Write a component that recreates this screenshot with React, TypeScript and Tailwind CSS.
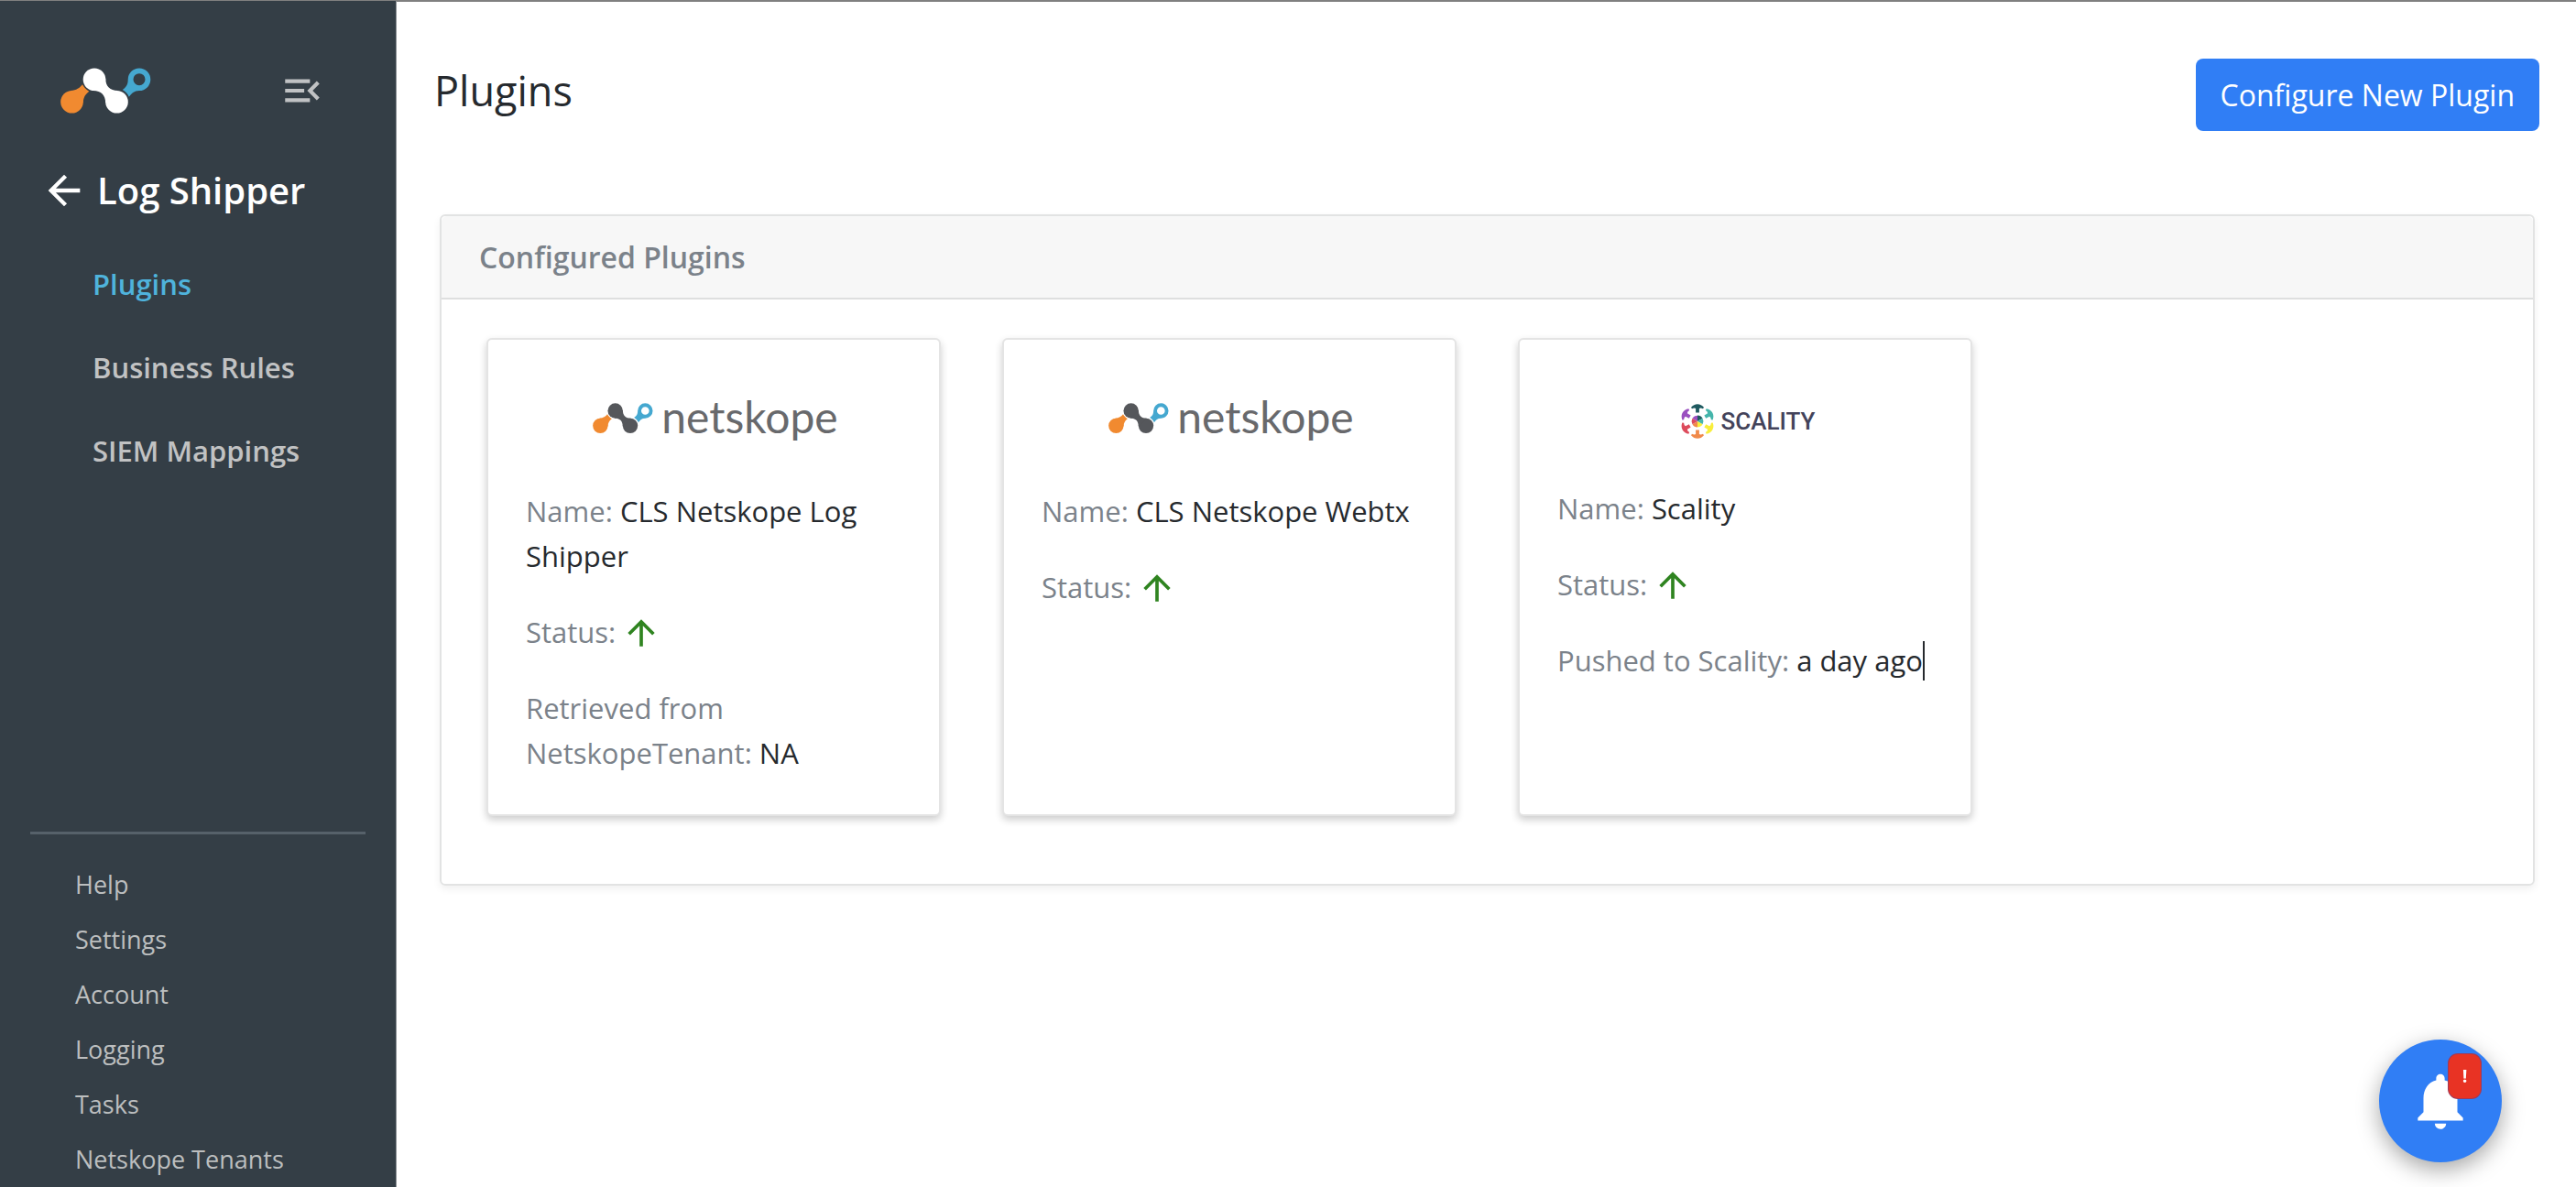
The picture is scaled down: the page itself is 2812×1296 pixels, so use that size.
import React from "react";
import { MdArrowBack, MdArrowUpward, MdMenuOpen, MdNotifications } from "react-icons/md";

const NAV = ["Plugins", "Business Rules", "SIEM Mappings"];
const FOOTER = ["Help", "Settings", "Account", "Logging", "Tasks", "Netskope Tenants"];

function NetskopeMark({ className, body }: { className: string; body: string }) {
  return (
    <svg viewBox="0 0 99 50" className={className} aria-hidden="true">
      <g fill="#f18a30">
        <circle cx="12.5" cy="37.3" r="12.3" />
        <path d="M11 25.1 C17.5 24.6 21 22 24 18.3 C25.8 21.3 28.2 24 31.3 25.7 C27.3 28.8 25 32 24.7 38.5 Z" />
      </g>
      <g fill={body}>
        <circle cx="37" cy="12.7" r="12.3" />
        <circle cx="61.5" cy="37.3" r="12.3" />
        <path d="M49.2 11.5 C49.4 20.5 54 24.8 62.7 25.1 L49.3 38.5 C49 29.5 44.5 25.2 35.8 24.9 Z" />
      </g>
      <path
        fill="#45a8d0"
        fillRule="evenodd"
        d="M86 .4 A12.3 12.3 0 0 1 86 25 C80.5 25 77.5 28 74.8 31.8 C73.3 28.3 71 25.7 67.7 24 C72 20.8 73.7 18.5 73.7 12.7 A12.3 12.3 0 0 1 86 .4 Z M86 6.2 A6.5 6.5 0 1 0 86 19.2 A6.5 6.5 0 1 0 86 6.2 Z"
      />
    </svg>
  );
}

function NetskopeLogo() {
  return (
    <div className="flex h-[124px] justify-center pt-[18px] pl-1">
      <div className="flex h-[58px] items-center gap-[9px]">
        <NetskopeMark className="w-[66px]" body="#55575b" />
        <span className="pb-1 font-[Lato] text-[48px] leading-[58px] text-[#68696c]">netskope</span>
      </div>
    </div>
  );
}

const SPOKES = [
  { angle: 0, color: "#1f5a60" },
  { angle: 60, color: "#45b5ab" },
  { angle: 120, color: "#f8ee3c" },
  { angle: 180, color: "#f08a4b" },
  { angle: 240, color: "#dd4b5c" },
  { angle: 300, color: "#9a4fc0" },
];

function ScalityLogo() {
  return (
    <div className="flex h-[121px] items-start justify-center pt-[30px] pl-1">
      <div className="flex h-10 items-center gap-[6px]">
        <svg viewBox="-20 -20 40 40" className="size-10" aria-hidden="true">
          {SPOKES.map((s) => (
            <g key={s.angle} transform={`rotate(${s.angle})`}>
              <path d="M-7 -15.2 Q-4 -18.8 0 -18.8 Q4 -18.8 7 -15.2 L6 -13.7 Q3.5 -15 1.9 -14 L1.9 -9.6 L-1.9 -9.6 L-1.9 -14 Q-3.5 -15 -6 -13.7 Z" fill={s.color} />
              <path d="M0 0 L0 -6.4 A6.4 6.4 0 0 1 5.5 -3.2 Z" fill={s.color} />
            </g>
          ))}
        </svg>
        <span className="font-[Roboto] text-[26px] leading-10 font-medium text-[#43435a]">SCALITY</span>
      </div>
    </div>
  );
}

function Status() {
  return (
    <p className="flex items-center">
      Status:
      <MdArrowUpward className="ml-[6px] size-[44px] text-[#2f8420]" aria-label="Up" />
    </p>
  );
}

function PluginCard({ children }: { children: React.ReactNode }) {
  return (
    <article className="w-[496px] rounded-md border-2 border-[#e4e4e4] bg-white px-[41px] pt-[39px] pb-[42px] shadow-[0_4px_8px_rgba(0,0,0,0.2)]">
      {children}
    </article>
  );
}

function Details({ children }: { children: React.ReactNode }) {
  return <div className="flex flex-col gap-[34px] text-[31px] leading-[49px] text-[#7b828a]">{children}</div>;
}

function Value({ children }: { children: React.ReactNode }) {
  return <span className="text-[#262a2e]">{children}</span>;
}

export default function App() {
  return (
    <div className="flex min-h-screen border-t-2 border-[#808080] bg-white font-['Open_Sans','Noto_Sans',sans-serif]">
      <aside className="-mt-px flex w-[433px] shrink-0 flex-col border-r border-[#8d9296] bg-[#343e46]">
        <div className="flex items-center justify-between pt-[73px] pr-[77px] pl-[66px]">
          <NetskopeMark className="w-[99px]" body="#fff" />
          <button type="button" aria-label="Collapse menu" className="text-[#c0c2c4]">
            <MdMenuOpen className="size-[50px]" />
          </button>
        </div>
        <a href="#modules" className="mt-[54px] flex items-center gap-[10px] pl-[44px] text-[40px] leading-[60px] font-semibold text-white">
          <MdArrowBack className="size-[52px]" />
          Log Shipper
        </a>
        <nav aria-label="Log Shipper" className="mt-[27px] flex flex-col pl-[101px]">
          {NAV.map((item, i) => (
            <a
              key={item}
              href="#nav"
              aria-current={i === 0 ? "page" : undefined}
              className={
                i === 0
                  ? "text-[31px] leading-[91px] font-semibold text-[#4fb3dc]"
                  : "text-[31px] leading-[91px] font-semibold text-[#c1c2c3]"
              }
            >
              {item}
            </a>
          ))}
        </nav>
        <div className="mx-[33px] mt-auto border-t-[3px] border-[#56616a] pt-[25px]">
          <nav aria-label="General" className="flex flex-col pl-[49px]">
            {FOOTER.map((item) => (
              <a key={item} href="#general" className="text-[27px] leading-[60px] text-[#bcbebf]">
                {item}
              </a>
            ))}
          </nav>
        </div>
      </aside>

      <main className="flex-1 pt-[62px] pr-[40px] pl-[41px]">
        <header className="flex items-start justify-between">
          <h1 className="text-[45px] leading-[70px] text-[#262a2e]">Plugins</h1>
          <button type="button" className="rounded-lg bg-[#307ef5] px-[27px] text-[32px] leading-[79px] text-white">
            Configure New Plugin
          </button>
        </header>

        <section className="mt-[91px] mr-[5px] ml-[6px] rounded-md border-2 border-[#e2e3e3] shadow-[0_4px_8px_rgba(0,0,0,0.06)]">
          <h2 className="rounded-t-md border-b-2 border-[#dedfdf] bg-[#f7f7f7] px-[41px] text-[32px] leading-[89px] font-semibold text-[#7b828a]">
            Configured Plugins
          </h2>
          <div className="flex flex-wrap gap-x-[67px] gap-y-12 px-[49px] pt-[42px] pb-[74px]">
            <PluginCard>
              <NetskopeLogo />
              <Details>
                <p>
                  Name: <Value>CLS Netskope Log Shipper</Value>
                </p>
                <Status />
                <p>
                  Retrieved from NetskopeTenant: <Value>NA</Value>
                </p>
              </Details>
            </PluginCard>
            <PluginCard>
              <NetskopeLogo />
              <Details>
                <p>
                  Name: <Value>CLS Netskope Webtx</Value>
                </p>
                <Status />
              </Details>
            </PluginCard>
            <PluginCard>
              <ScalityLogo />
              <Details>
                <p>
                  Name: <Value>Scality</Value>
                </p>
                <Status />
                <p className="flex items-center whitespace-pre">
                  Pushed to Scality: <Value>a day ago</Value>
                  <span className="h-[43px] w-[2px] bg-[#262a2e]" />
                </p>
              </Details>
            </PluginCard>
          </div>
        </section>
      </main>

      <button
        type="button"
        aria-label="Notifications"
        className="fixed right-[81px] bottom-[27px] flex size-[134px] items-center justify-center rounded-full bg-[#307ef5] text-white shadow-[0_8px_24px_rgba(0,0,0,0.35)]"
      >
        <MdNotifications className="size-[74px]" />
        <span className="absolute top-[16px] right-[23px] flex h-12 w-[35px] items-center justify-center rounded-[10px] bg-[#e83324] text-[20px] font-bold ring-1 ring-[#a03a58]">
          !
        </span>
      </button>
    </div>
  );
}
